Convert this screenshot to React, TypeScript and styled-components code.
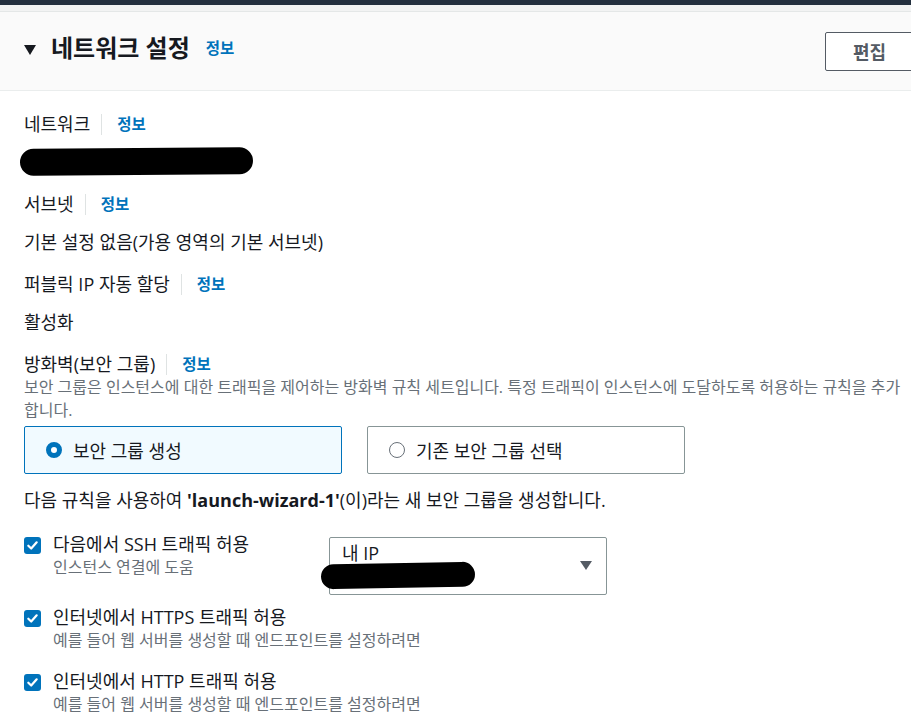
import React from 'react';
import styled, { createGlobalStyle } from 'styled-components';

const GlobalStyle = createGlobalStyle`
  html, body {
    margin: 0;
    padding: 0;
    background: #ffffff;
    overflow: hidden;
  }
  body {
    font-family: "Open Sans", "Noto Sans CJK KR", sans-serif;
    color: #16191f;
  }
`;

const Page = styled.div`
  width: 940px;
`;

const TopBar = styled.div`
  height: 5px;
  background: #232f3e;
`;

const Strip = styled.div`
  height: 6px;
  background: #f2f3f3;
  border-bottom: 1px solid #e4e7e7;
`;

const Header = styled.header`
  display: flex;
  justify-content: space-between;
  align-items: center;
  height: 79px;
  box-sizing: border-box;
  padding: 0 24px;
  background: #fafafa;
  border-bottom: 1px solid #eaeded;
`;

const TitleGroup = styled.div`
  display: flex;
  align-items: center;
  align-self: flex-start;
  padding-top: 21px;
  height: 30px;
`;

const Caret = styled.span`
  width: 0;
  height: 0;
  margin-top: 3px;
  border-left: 6.5px solid transparent;
  border-right: 6.5px solid transparent;
  border-top: 10px solid #16191f;
`;

const Title = styled.h2`
  margin: 0 0 0 15px;
  font-size: 24px;
  font-weight: 700;
  line-height: 30px;
`;

const Info = styled.a<{ $gap?: number }>`
  margin-left: ${(p) => p.$gap ?? 15}px;
  font-size: 15.5px;
  font-weight: 700;
  color: #0073bb;
  text-decoration: none;
  line-height: 24px;
`;

const EditButton = styled.button`
  width: 89px;
  height: 39px;
  margin-right: 2px;
  box-sizing: border-box;
  border: 1px solid #545b64;
  border-radius: 2px;
  background: #ffffff;
  color: #545b64;
  font-family: inherit;
  font-size: 18px;
  font-weight: 700;
`;

const Body = styled.div`
  display: flex;
  flex-direction: column;
  padding: 21px 24px 0 24px;
`;

const Field = styled.div`
  display: flex;
  flex-direction: column;
  margin-bottom: 18px;
`;

const LabelRow = styled.div<{ $gap?: number }>`
  display: flex;
  align-items: center;
  height: 24px;
  margin-bottom: ${(p) => p.$gap ?? 14}px;
`;

const Label = styled.span`
  font-size: 18px;
  line-height: 24px;
  padding-right: 11px;
  border-right: 1px solid #dfe3e3;
  height: 21px;
  display: flex;
  align-items: center;
`;

const Value = styled.div`
  font-size: 18px;
  line-height: 24px;
  height: 24px;
`;

const Blob = styled.div<{ $w: number; $h: number; $tilt: number; $shift: number }>`
  width: ${(p) => p.$w}px;
  height: ${(p) => p.$h}px;
  margin-left: ${(p) => p.$shift}px;
  background: #000000;
  border-radius: ${(p) => p.$h / 2}px;
  transform: translateY(-2px) rotate(${(p) => p.$tilt}deg);
`;

const Help = styled.p`
  margin: 0;
  padding-right: 10px;
  font-size: 16px;
  line-height: 23px;
  color: #687078;
`;

const Options = styled.div`
  display: flex;
  gap: 25px;
  margin-top: 4px;
`;

const Option = styled.label<{ $selected?: boolean }>`
  display: flex;
  align-items: center;
  gap: 11px;
  width: 318px;
  height: 48px;
  box-sizing: border-box;
  padding: 0 21px;
  border: 1px solid ${(p) => (p.$selected ? '#0073bb' : '#879596')};
  border-radius: 2px;
  background: ${(p) => (p.$selected ? '#f1faff' : '#ffffff')};
  font-size: 18px;
`;

const Radio = styled.span<{ $checked?: boolean }>`
  width: 16px;
  height: 16px;
  box-sizing: border-box;
  border-radius: 50%;
  border: ${(p) => (p.$checked ? '5px solid #0073bb' : '1.5px solid #687078')};
  background: #ffffff;
`;

const Sentence = styled.p`
  margin: 14px 0 0 0;
  font-size: 18px;
  line-height: 24px;

  strong {
    font-weight: 700;
  }
`;

const Rules = styled.div`
  display: flex;
  flex-direction: column;
  margin-top: 20px;
`;

const RuleRow = styled.div<{ $after: number }>`
  display: flex;
  align-items: flex-start;
  margin-bottom: ${(p) => p.$after}px;
`;

const RuleCheck = styled.div`
  display: flex;
  gap: 12px;
  width: 305px;
  white-space: nowrap;
`;

const Box = styled.span`
  flex: none;
  width: 17px;
  height: 17px;
  margin-top: 5px;
  border-radius: 3px;
  background: #0073bb;
  display: flex;
  align-items: center;
  justify-content: center;
`;

const RuleText = styled.div`
  display: flex;
  flex-direction: column;
`;

const RuleTitle = styled.span`
  font-size: 18px;
  line-height: 24px;
`;

const RuleHint = styled.span`
  font-size: 16px;
  line-height: 22px;
  color: #687078;
`;

const Select = styled.div`
  position: relative;
  width: 278px;
  height: 58px;
  margin-top: 5px;
  box-sizing: border-box;
  padding: 3px 40px 3px 12px;
  border: 1px solid #879596;
  border-radius: 2px;
  font-size: 18px;
  line-height: 24px;
`;

const SelectCaret = styled.span`
  position: absolute;
  right: 14px;
  top: 23px;
  width: 0;
  height: 0;
  border-left: 6.5px solid transparent;
  border-right: 6.5px solid transparent;
  border-top: 9px solid #545b64;
`;

const SelectLine = styled.div`
  height: 24px;
  display: flex;
  align-items: center;
`;

const Check = () => (
  <svg width="13" height="13" viewBox="0 0 14 14" fill="none">
    <path d="M2.5 7.2 L5.6 10.2 L11.5 3.6" stroke="#ffffff" strokeWidth="2.4" strokeLinecap="round" strokeLinejoin="round" />
  </svg>
);

const rules = [
  { title: '다음에서 SSH 트래픽 허용', hint: '인스턴스 연결에 도움', select: true, after: 10 },
  { title: '인터넷에서 HTTPS 트래픽 허용', hint: '예를 들어 웹 서버를 생성할 때 엔드포인트를 설정하려면', after: 18 },
  { title: '인터넷에서 HTTP 트래픽 허용', hint: '예를 들어 웹 서버를 생성할 때 엔드포인트를 설정하려면', after: 0 },
];

export default function App() {
  return (
    <Page>
      <GlobalStyle />
      <TopBar />
      <Strip />
      <Header>
        <TitleGroup>
          <Caret />
          <Title>네트워크 설정</Title>
          <Info $gap={16}>정보</Info>
        </TitleGroup>
        <EditButton>편집</EditButton>
      </Header>
      <Body>
        <Field>
          <LabelRow>
            <Label>네트워크</Label>
            <Info>정보</Info>
          </LabelRow>
          <Value>
            <Blob $w={233} $h={27} $tilt={-0.4} $shift={-4} />
          </Value>
        </Field>
        <Field>
          <LabelRow>
            <Label>서브넷</Label>
            <Info>정보</Info>
          </LabelRow>
          <Value>기본 설정 없음(가용 영역의 기본 서브넷)</Value>
        </Field>
        <Field>
          <LabelRow>
            <Label>퍼블릭 IP 자동 할당</Label>
            <Info>정보</Info>
          </LabelRow>
          <Value>활성화</Value>
        </Field>
        <div>
          <LabelRow $gap={0}>
            <Label>방화벽(보안 그룹)</Label>
            <Info>정보</Info>
          </LabelRow>
          <Help>
            보안 그룹은 인스턴스에 대한 트래픽을 제어하는 방화벽 규칙 세트입니다. 특정 트래픽이 인스턴스에 도달하도록 허용하는 규칙을 추가합니다.
          </Help>
          <Options>
            <Option $selected>
              <Radio $checked />
              보안 그룹 생성
            </Option>
            <Option>
              <Radio />
              기존 보안 그룹 선택
            </Option>
          </Options>
          <Sentence>
            다음 규칙을 사용하여 <strong>'launch-wizard-1'</strong>(이)라는 새 보안 그룹을 생성합니다.
          </Sentence>
          <Rules>
            {rules.map((r) => (
              <RuleRow key={r.title} $after={r.after}>
                <RuleCheck>
                  <Box>
                    <Check />
                  </Box>
                  <RuleText>
                    <RuleTitle>{r.title}</RuleTitle>
                    <RuleHint>{r.hint}</RuleHint>
                  </RuleText>
                </RuleCheck>
                {r.select && (
                  <Select>
                    <SelectLine>내 IP</SelectLine>
                    <SelectLine>
                      <Blob $w={154} $h={25} $tilt={-1} $shift={-21} />
                    </SelectLine>
                    <SelectCaret />
                  </Select>
                )}
              </RuleRow>
            ))}
          </Rules>
        </div>
      </Body>
    </Page>
  );
}
